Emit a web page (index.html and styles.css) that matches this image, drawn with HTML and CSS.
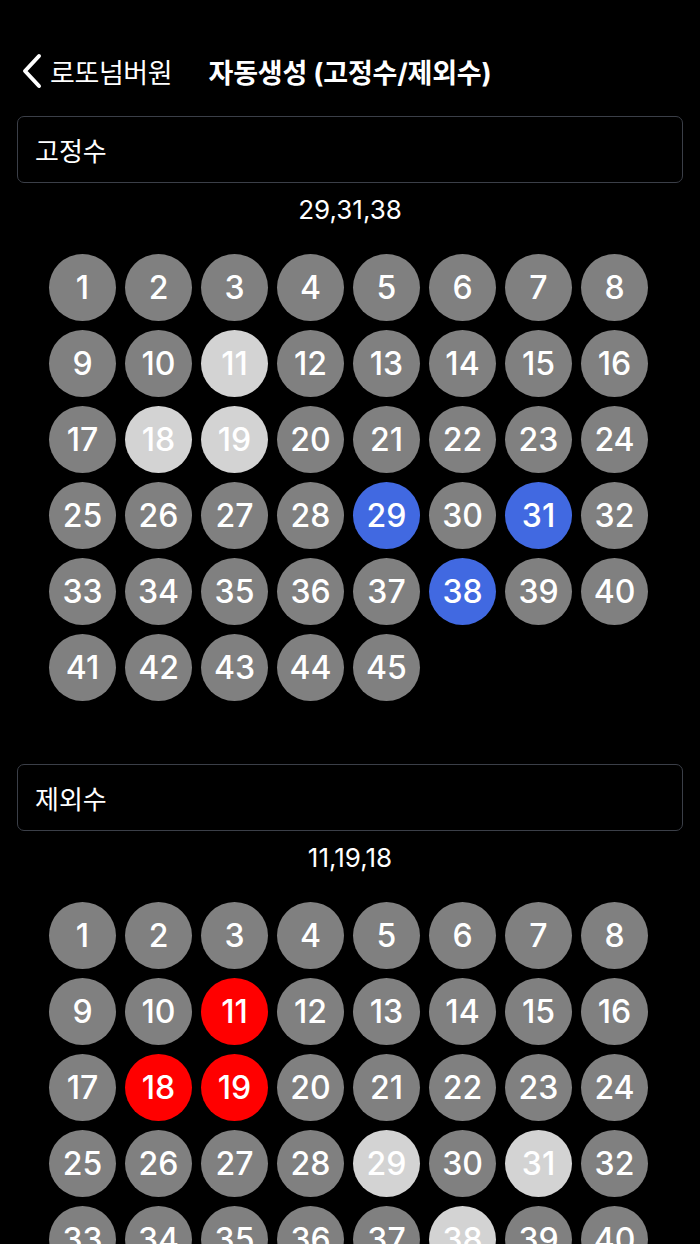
FILE: index.html
```html
<!DOCTYPE html>
<html lang="ko">
<head>
<meta charset="utf-8">
<title>자동생성 (고정수/제외수)</title>
<link rel="stylesheet" href="styles.css">
</head>
<body>
<header class="nav">
  <div class="nav-back">
    <svg class="chev" width="22" height="36" viewBox="0 0 22 36"><polyline points="18,3 4,18 18,33" fill="none" stroke="#fff" stroke-width="4" stroke-linecap="round" stroke-linejoin="round"/></svg>
    <span class="back-label">로또넘버원</span>
  </div>
  <h1 class="nav-title">자동생성 (고정수/제외수)</h1>
  <div></div>
</header>

<section class="section">
  <div class="field">고정수</div>
  <div class="picked">29,31,38</div>
  <div class="grid">
    <div class="ball">1</div><div class="ball">2</div><div class="ball">3</div><div class="ball">4</div><div class="ball">5</div><div class="ball">6</div><div class="ball">7</div><div class="ball">8</div>
    <div class="ball">9</div><div class="ball">10</div><div class="ball dim">11</div><div class="ball">12</div><div class="ball">13</div><div class="ball">14</div><div class="ball">15</div><div class="ball">16</div>
    <div class="ball">17</div><div class="ball dim">18</div><div class="ball dim">19</div><div class="ball">20</div><div class="ball">21</div><div class="ball">22</div><div class="ball">23</div><div class="ball">24</div>
    <div class="ball">25</div><div class="ball">26</div><div class="ball">27</div><div class="ball">28</div><div class="ball sel">29</div><div class="ball">30</div><div class="ball sel">31</div><div class="ball">32</div>
    <div class="ball">33</div><div class="ball">34</div><div class="ball">35</div><div class="ball">36</div><div class="ball">37</div><div class="ball sel">38</div><div class="ball">39</div><div class="ball">40</div>
    <div class="ball">41</div><div class="ball">42</div><div class="ball">43</div><div class="ball">44</div><div class="ball">45</div>
  </div>
</section>

<section class="section section--second">
  <div class="field">제외수</div>
  <div class="picked">11,19,18</div>
  <div class="grid">
    <div class="ball">1</div><div class="ball">2</div><div class="ball">3</div><div class="ball">4</div><div class="ball">5</div><div class="ball">6</div><div class="ball">7</div><div class="ball">8</div>
    <div class="ball">9</div><div class="ball">10</div><div class="ball ex">11</div><div class="ball">12</div><div class="ball">13</div><div class="ball">14</div><div class="ball">15</div><div class="ball">16</div>
    <div class="ball">17</div><div class="ball ex">18</div><div class="ball ex">19</div><div class="ball">20</div><div class="ball">21</div><div class="ball">22</div><div class="ball">23</div><div class="ball">24</div>
    <div class="ball">25</div><div class="ball">26</div><div class="ball">27</div><div class="ball">28</div><div class="ball dim">29</div><div class="ball">30</div><div class="ball dim">31</div><div class="ball">32</div>
    <div class="ball">33</div><div class="ball">34</div><div class="ball">35</div><div class="ball">36</div><div class="ball">37</div><div class="ball dim">38</div><div class="ball">39</div><div class="ball">40</div>
    <div class="ball">41</div><div class="ball">42</div><div class="ball">43</div><div class="ball">44</div><div class="ball">45</div>
  </div>
</section>
</body>
</html>
```

FILE: styles.css
```css
html, body {
  margin: 0;
  padding: 0;
  background: #000;
  color: #fff;
  font-family: "Inter", "Noto Sans CJK KR", sans-serif;
}

.nav {
  display: grid;
  grid-template-columns: 1fr auto 1fr;
  align-items: center;
  height: 56px;
  margin-top: 43px;
  padding: 0 21px;
}

.nav-back {
  display: flex;
  align-items: center;
  gap: 7px;
}

.chev {
  display: block;
}

.back-label {
  font-family: "Noto Sans CJK KR", sans-serif;
  font-size: 27px;
  font-weight: 400;
  letter-spacing: -0.4px;
}

.nav-title {
  margin: 0;
  font-family: "Inter", "Noto Sans CJK KR", sans-serif;
  font-size: 27px;
  font-weight: 700;
  letter-spacing: -0.2px;
}

.section {
  padding: 0 17px;
  margin-top: 17px;
}

.section--second {
  margin-top: 63px;
}

.field {
  box-sizing: border-box;
  height: 67px;
  border: 1.5px solid #3b3f48;
  border-radius: 7px;
  padding: 0 17px;
  display: flex;
  align-items: center;
  font-family: "Noto Sans CJK KR", sans-serif;
  font-size: 26px;
}

.picked {
  margin-top: 12px;
  text-align: center;
  font-size: 26px;
  line-height: 30px;
}

.grid {
  margin-top: 29px;
  display: grid;
  grid-template-columns: repeat(8, 67px);
  grid-auto-rows: 67px;
  gap: 9px;
  justify-content: start;
  padding-left: 32px;
}

.ball {
  width: 67px;
  height: 67px;
  border-radius: 50%;
  background: #808080;
  color: #fff;
  display: flex;
  align-items: center;
  justify-content: center;
  font-size: 32px;
  font-weight: 500;
}

.ball.dim { background: #d3d3d3; }
.ball.sel { background: #4169e1; }
.ball.ex { background: #ff0000; }
```
